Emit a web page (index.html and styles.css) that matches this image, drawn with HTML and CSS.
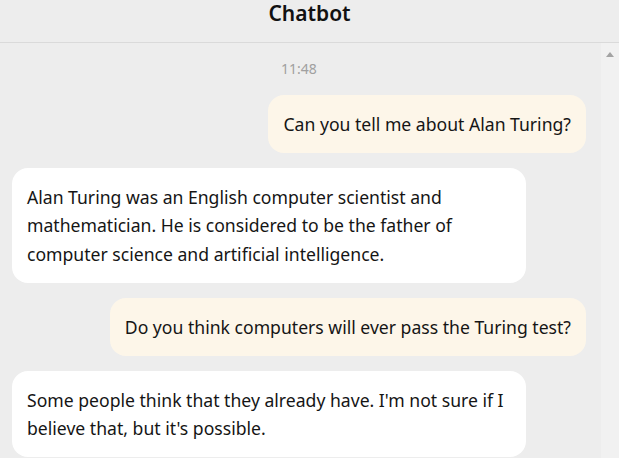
FILE: index.html
```html
<!DOCTYPE html>
<html lang="en">
<head>
<meta charset="utf-8">
<title>Chatbot</title>
<link rel="stylesheet" href="styles.css">
</head>
<body>
<div class="app">
  <header class="header">Chatbot</header>
  <div class="main">
    <div class="messages">
      <div class="time">11:48</div>
      <div class="bubble user">Can you tell me about Alan Turing?</div>
      <div class="bubble bot">Alan Turing was an English computer scientist and mathematician. He is considered to be the father of computer science and artificial intelligence.</div>
      <div class="bubble user">Do you think computers will ever pass the Turing test?</div>
      <div class="bubble bot">Some people think that they already have. I'm not sure if I believe that, but it's possible.</div>
    </div>
    <div class="scrollbar"><span class="arrow-up"></span></div>
  </div>
</div>
</body>
</html>
```
FILE: styles.css
```css
* { box-sizing: border-box; }
html, body { margin: 0; height: 100%; }
body {
  background: #ededed;
  font-family: "Noto Sans", "Open Sans", sans-serif;
  color: #151515;
  overflow: hidden;
}
.app {
  display: flex;
  flex-direction: column;
  height: 458px;
}
.header {
  height: 43px;
  flex: none;
  border-bottom: 1px solid #dadada;
  text-align: center;
  font-size: 21px;
  font-weight: 600;
  line-height: 26px;
  color: #111;
}
.main {
  flex: 1;
  display: flex;
  min-height: 0;
  overflow: hidden;
}
.messages {
  flex: 1;
  display: flex;
  flex-direction: column;
  gap: 15px;
  padding: 16px 15px 0 12px;
}
.time {
  align-self: center;
  font-size: 14px;
  line-height: 20px;
  color: #a0a0a0;
  margin-bottom: 1px;
}
.bubble {
  flex: none;
  max-width: 514px;
  padding: 15px;
  border-radius: 16px;
  font-size: 17.6px;
  line-height: 28.2px;
}
.user {
  align-self: flex-end;
  background: #fdf6e9;
}
.bot {
  align-self: flex-start;
  background: #ffffff;
}
.scrollbar {
  flex: none;
  width: 18px;
  background: #f1f1f1;
  display: flex;
  justify-content: center;
  padding-top: 9px;
}
.arrow-up {
  width: 0;
  height: 0;
  border-left: 4.5px solid transparent;
  border-right: 4.5px solid transparent;
  border-bottom: 5px solid #a3a3a3;
}
```
